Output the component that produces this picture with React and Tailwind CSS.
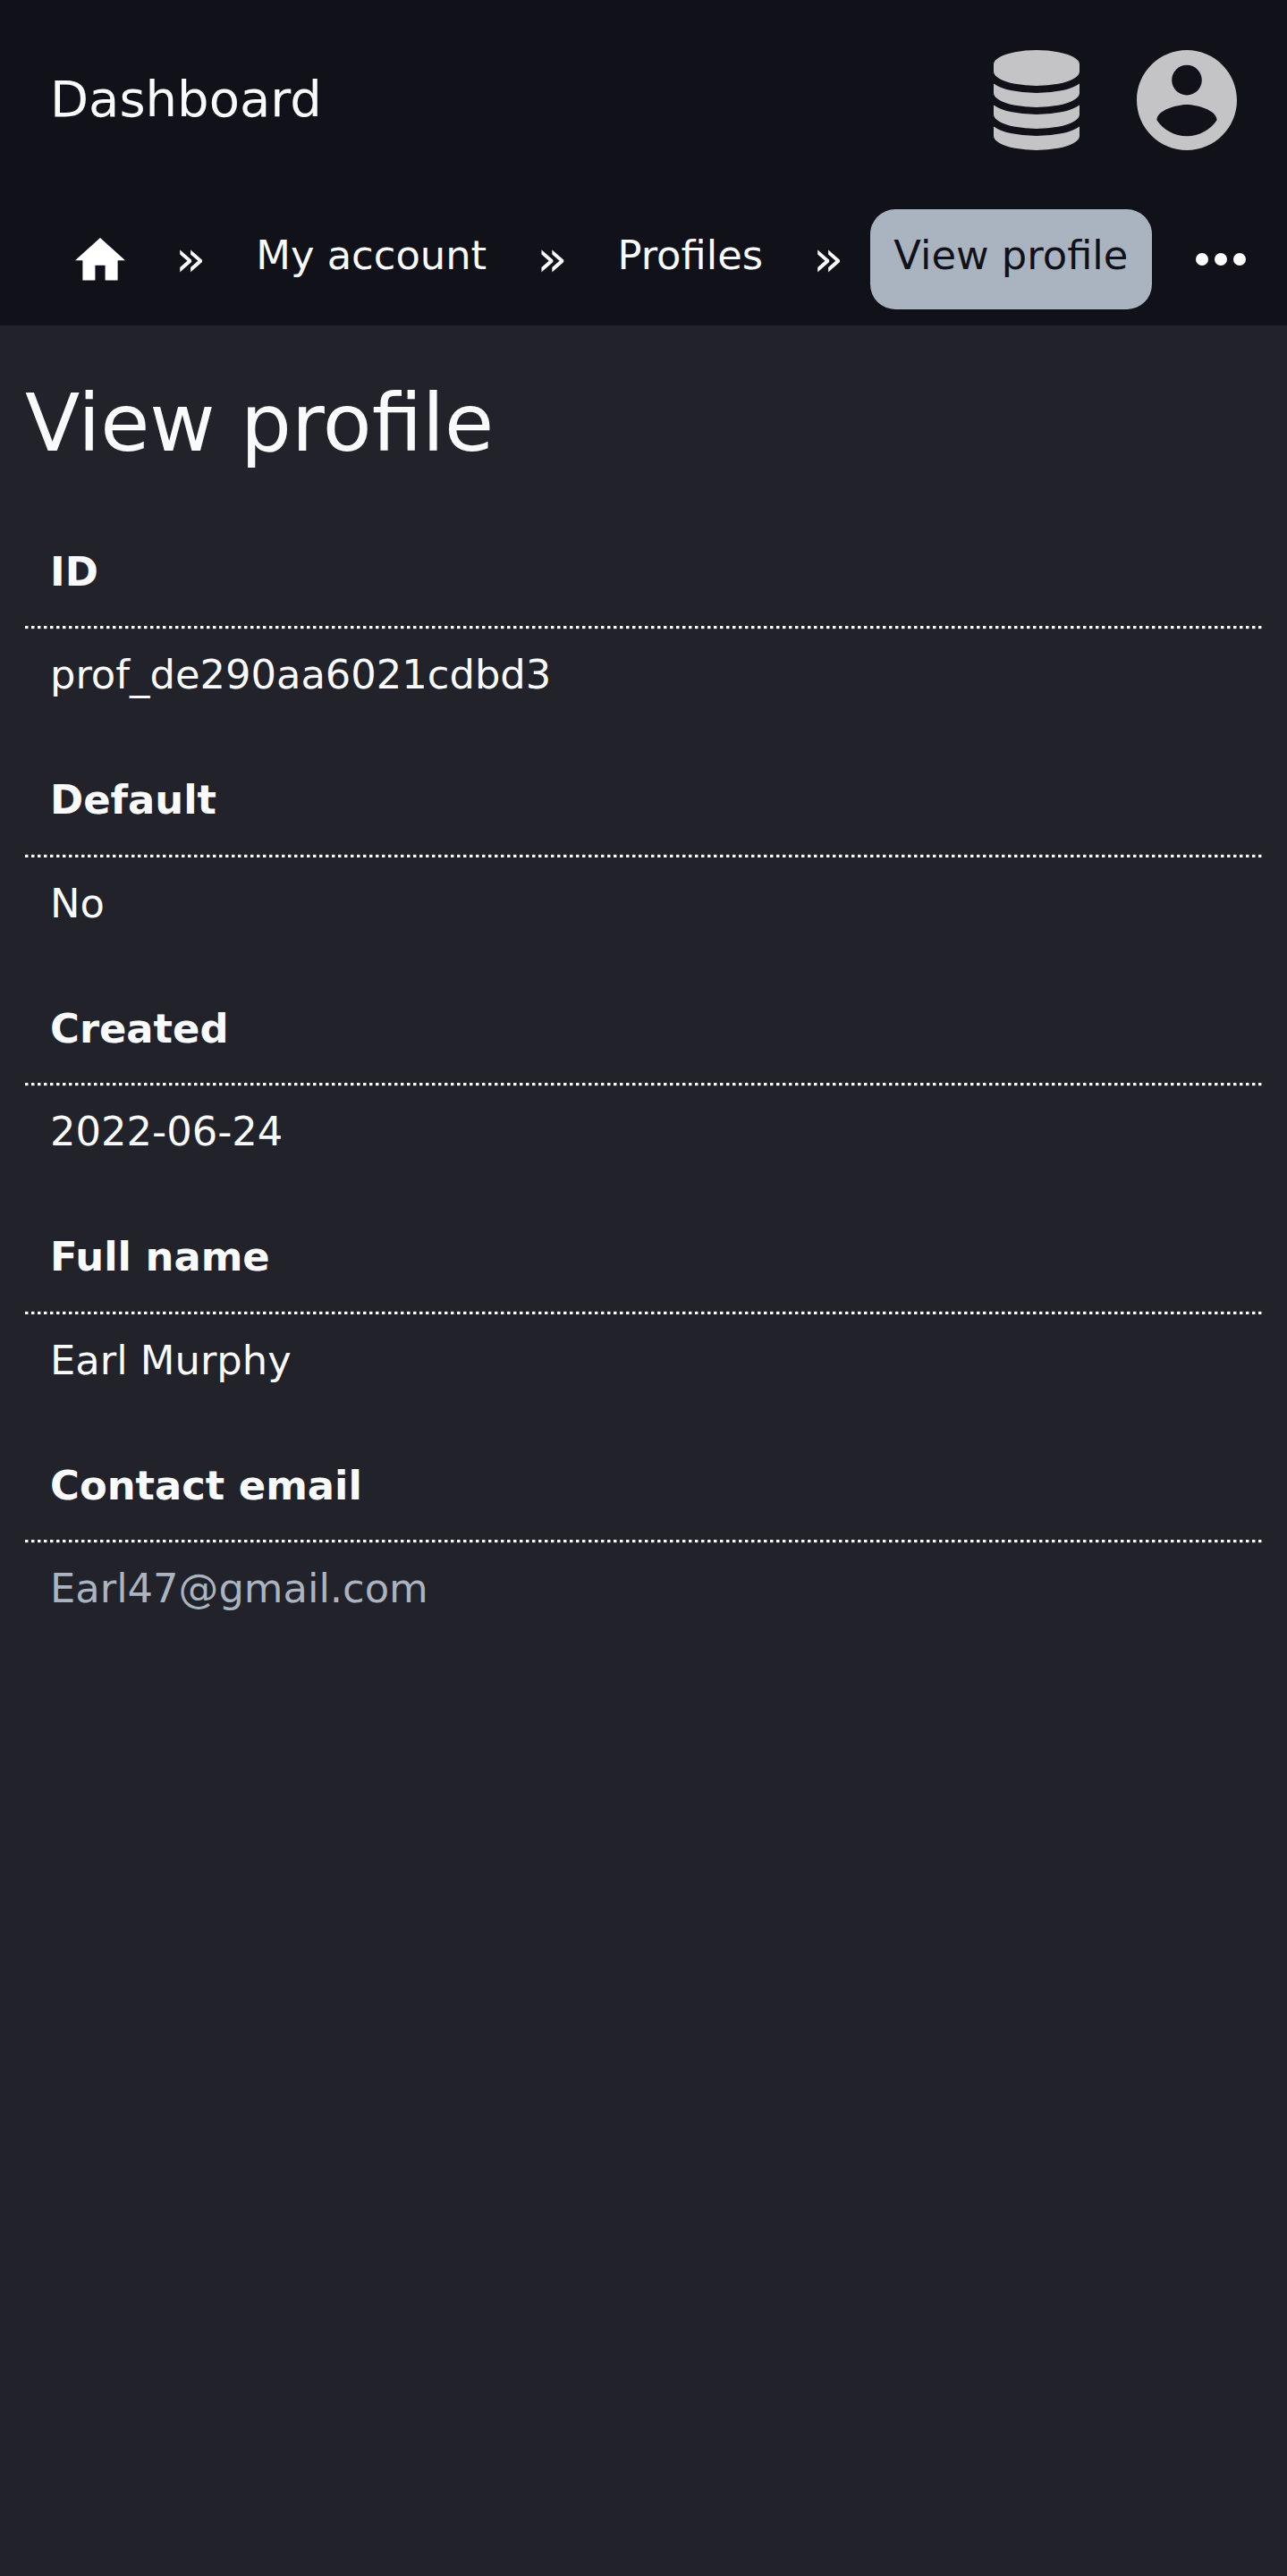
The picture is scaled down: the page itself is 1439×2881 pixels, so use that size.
const fields = [
  { label: "ID", value: "prof_de290aa6021cdbd3" },
  { label: "Default", value: "No" },
  { label: "Created", value: "2022-06-24" },
  { label: "Full name", value: "Earl Murphy" },
  { label: "Contact email", value: "Earl47@gmail.com", link: true },
];

function DatabaseIcon() {
  return (
    <svg viewBox="0 0 1536 1792" className="h-28 w-28" fill="currentColor">
      <path d="M768 768q237 0 443-43t325-127v170q0 69-103 128t-280 93.5-385 34.5-385-34.5-280-93.5-103-128v-170q119 84 325 127t443 43zm0 768q237 0 443-43t325-127v170q0 69-103 128t-280 93.5-385 34.5-385-34.5-280-93.5-103-128v-170q119 84 325 127t443 43zm0-384q237 0 443-43t325-127v170q0 69-103 128t-280 93.5-385 34.5-385-34.5-280-93.5-103-128v-170q119 84 325 127t443 43zm0-1152q208 0 385 34.5t280 93.5 103 128v128q0 69-103 128t-280 93.5-385 34.5-385-34.5-280-93.5-103-128v-128q0-69 103-128t280-93.5 385-34.5z" />
    </svg>
  );
}

function AccountIcon() {
  return (
    <svg viewBox="2 2 20 20" className="h-28 w-28" fill="currentColor">
      <path d="M12 2C6.48 2 2 6.48 2 12s4.48 10 10 10 10-4.48 10-10S17.52 2 12 2zm0 3c1.66 0 3 1.34 3 3s-1.34 3-3 3-3-1.34-3-3 1.34-3 3-3zm0 14.2c-2.5 0-4.71-1.28-6-3.22.03-1.99 4-3.08 6-3.08 1.99 0 5.97 1.09 6 3.08-1.29 1.94-3.5 3.22-6 3.22z" />
    </svg>
  );
}

function Separator() {
  return <span className="mb-[3px] px-7 text-[56px] leading-[65px]">»</span>;
}

function Crumb({ children, active }) {
  return (
    <a
      className={
        active
          ? "mx-[1.75px] h-28 rounded-[28px] bg-[#aab4c0] px-[26.25px] leading-[103px] text-[#11111a]"
          : "h-28 px-7 leading-[103px]"
      }
    >
      {children}
    </a>
  );
}

const dots =
  "bg-[repeating-linear-gradient(90deg,#fff_0_3px,#88888c_3px_4px,transparent_4px_7px)]";

// Dotted rule with a faint edge row above (odd rows) or below (even rows).
function Rule({ odd }) {
  return (
    <div className="flex h-[5px] flex-col">
      <div className={`h-px opacity-15 ${odd ? dots : ""}`} />
      <div className={`h-[3px] ${dots}`} />
      <div className={`h-px opacity-15 ${odd ? "" : dots}`} />
    </div>
  );
}

export default function App() {
  return (
    <div className="min-h-[2881px] w-full bg-[#22222a] font-['DejaVu_Sans',sans-serif] text-[44.8px] text-[#f9fafc]">
      <header className="h-[364px] bg-[#11111a]">
        <div className="flex h-56 items-center justify-between pl-14 pr-[56.5px]">
          <span className="mb-[3px] text-[56px] leading-[65px]">Dashboard</span>
          <div className="flex gap-14 text-[#c4c4c6]">
            <DatabaseIcon />
            <AccountIcon />
          </div>
        </div>
        <nav className="mt-2.5 flex h-28 items-center whitespace-nowrap pl-14 pr-[46px]">
          <a className="px-7 text-white">
            <svg viewBox="2 3 20 17" className="h-[47.6px] w-14" fill="currentColor">
              <path d="M10 20v-6h4v6h5v-8h3L12 3 2 12h3v8z" />
            </svg>
          </a>
          <Separator />
          <Crumb>My account</Crumb>
          <Separator />
          <Crumb>Profiles</Crumb>
          <Separator />
          <Crumb active>View profile</Crumb>
          <svg viewBox="4 10 16 4" className="ml-auto h-3.5 w-14 text-white" fill="currentColor">
            <circle cx="6" cy="12" r="2" />
            <circle cx="12" cy="12" r="2" />
            <circle cx="18" cy="12" r="2" />
          </svg>
        </nav>
      </header>
      <main className="px-7 pt-[57px]">
        <h1 className="text-[89.6px] leading-[104px]">View profile</h1>
        <dl className="mt-[58px]">
          {fields.map((f, i) => (
            <div key={f.label} className="h-[255.5px]">
              <dt className="h-[116px] px-7 pt-[28.5px] font-bold leading-[56px]">{f.label}</dt>
              <Rule odd={i % 2 === 1} />
              <dd className={f.link ? "px-7 pt-[23px] leading-[56px] text-[#aab4c0]" : "px-7 pt-[23px] leading-[56px]"}>
                {f.value}
              </dd>
            </div>
          ))}
        </dl>
      </main>
    </div>
  );
}
